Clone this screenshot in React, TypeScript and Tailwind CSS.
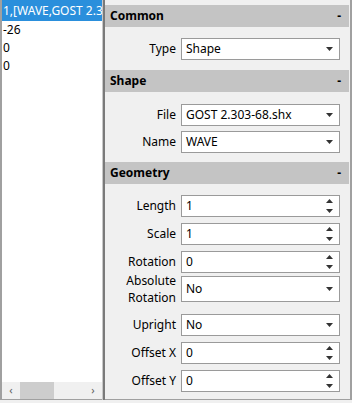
import React from "react";

const font = { fontFamily: '"Noto Sans", "Open Sans", "Liberation Sans", sans-serif' };

function Caret() {
  return (
    <svg width="7" height="4" viewBox="0 0 7 4" className="shrink-0">
      <path d="M0 0h7L3.5 4z" fill="#333" />
    </svg>
  );
}

function Combo({ value, tall = false }: { value: string; tall?: boolean }) {
  return (
    <div
      className={
        (tall ? "h-[26px] " : "h-[22px] ") +
        "flex items-center justify-between bg-white border border-[#9a9a9a] pl-[4px] pr-[6px]"
      }
    >
      <span className="text-[12px] text-black leading-none">{value}</span>
      <Caret />
    </div>
  );
}

function Spin({ value }: { value: string }) {
  return (
    <div className="h-[22px] flex items-center justify-between bg-white border border-[#9a9a9a] pl-[4px] pr-[6px]">
      <span className="text-[12px] text-black leading-none">{value}</span>
      <div className="flex flex-col gap-[6px]">
        <svg width="7" height="4" viewBox="0 0 7 4">
          <path d="M0 4h7L3.5 0z" fill="#333" />
        </svg>
        <svg width="7" height="4" viewBox="0 0 7 4">
          <path d="M0 0h7L3.5 4z" fill="#333" />
        </svg>
      </div>
    </div>
  );
}

function Header({ title }: { title: string }) {
  return (
    <div className="h-[22px] flex items-center justify-between bg-[#c4c4c4] pl-[5px] pr-[8px]">
      <span className="text-[12px] leading-[16px] font-bold text-black">{title}</span>
      <span className="text-[12px] leading-[16px] font-bold text-black">-</span>
    </div>
  );
}

function Row({
  label,
  children,
  className = "",
  leading = "leading-[18px]",
}: {
  label: React.ReactNode;
  children: React.ReactNode;
  className?: string;
  leading?: string;
}) {
  return (
    <div className={"grid grid-cols-[76px_1fr] items-center pr-[9px] " + className}>
      <div className={"text-right text-[12px] text-black pr-[5px] " + leading}>{label}</div>
      {children}
    </div>
  );
}

export default function App() {
  return (
    <div className="w-[352px] h-[403px] flex bg-[#f0f0f0] overflow-hidden" style={font}>
      {/* left list */}
      <div className="w-[102px] h-[400px] flex flex-col bg-white border-l-2 border-b border-[#a0a0a0]">
        <div className="h-[21px] bg-[#2a8fdc] text-white text-[12px] leading-[21px] pl-[1px] whitespace-nowrap overflow-hidden">
          1,[WAVE,GOST 2.303-68.shx
        </div>
        <div className="text-[12px] leading-[18px] pl-[1px] text-black">-26</div>
        <div className="text-[12px] leading-[18px] pl-[1px] text-black">0</div>
        <div className="text-[12px] leading-[18px] pl-[1px] text-black">0</div>
        <div className="flex-1" />
        <div className="h-[17px] flex items-center bg-[#f0f0f0]">
          <div className="w-[18px] flex justify-center text-[11px] text-[#606060]">‹</div>
          <div className="w-[34px] h-[17px] bg-[#cdcdcd]" />
          <div className="flex-1" />
          <div className="w-[18px] flex justify-center text-[11px] text-[#606060]">›</div>
        </div>
      </div>

      {/* splitter */}
      <div className="w-[3px] h-[400px] bg-[#7a7a7a] border-l border-[#c8c8c8]" />

      {/* property panel */}
      <div className="flex-1 h-[400px] flex flex-col border-r-2 border-b border-[#a0a0a0] pt-[5px] pr-[1px]">
        <Header title="Common" />
        <Row label="Type" className="mt-[11px]">
          <Combo value="Shape" />
        </Row>
        <div className="mt-[10px]">
          <Header title="Shape" />
        </div>
        <Row label="File" className="mt-[12px]">
          <Combo value="GOST 2.303-68.shx" />
        </Row>
        <Row label="Name" className="mt-[5px]">
          <Combo value="WAVE" />
        </Row>
        <div className="mt-[9px]">
          <Header title="Geometry" />
        </div>
        <Row label="Length" className="mt-[11px]">
          <Spin value="1" />
        </Row>
        <Row label="Scale" className="mt-[6px]">
          <Spin value="1" />
        </Row>
        <Row label="Rotation" className="mt-[6px]">
          <Spin value="0" />
        </Row>
        <Row
          label={
            <>
              Absolute
              <br />
              Rotation
            </>
          }
          className="-mt-px"
          leading="leading-[17px]"
        >
          <Combo value="No" tall />
        </Row>
        <Row label="Upright" className="mt-[8px]">
          <Combo value="No" />
        </Row>
        <Row label="Offset X" className="mt-[6px]">
          <Spin value="0" />
        </Row>
        <Row label="Offset Y" className="mt-[6px]">
          <Spin value="0" />
        </Row>
      </div>
    </div>
  );
}
